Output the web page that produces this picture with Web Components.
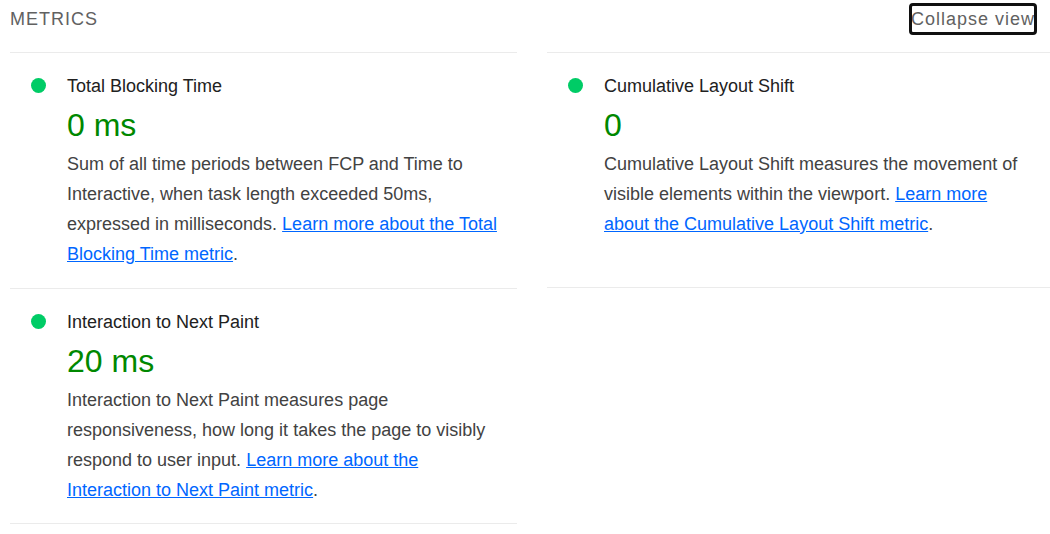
<!DOCTYPE html>
<html lang="en">
<head>
<meta charset="utf-8">
<title>Metrics</title>
<style>
body { margin: 0; background: #fff; font-family: "Liberation Sans", Arial, sans-serif; font-size: 18px; line-height: 30px; color: #212121; }
</style>
</head>
<body>
<metrics-panel>
  <span slot="title">METRICS</span>
  <metric-card name="Total Blocking Time" value="0 ms">Sum of all time periods between FCP and Time to Interactive, when task length exceeded 50ms, expressed in milliseconds. <metric-link href="#tbt">Learn more about the Total Blocking Time metric</metric-link>.</metric-card>
  <metric-card name="Cumulative Layout Shift" value="0" last>Cumulative Layout Shift measures the movement of visible elements within the viewport. <metric-link href="#cls">Learn more about the Cumulative Layout Shift metric</metric-link>.</metric-card>
  <metric-card name="Interaction to Next Paint" value="20 ms" last>Interaction to Next Paint measures page responsiveness, how long it takes the page to visibly respond to user input. <metric-link href="#inp">Learn more about the Interaction to Next Paint metric</metric-link>.</metric-card>
</metrics-panel>
<script>
class MetricLink extends HTMLElement {
  connectedCallback() {
    const root = this.attachShadow({ mode: "open" });
    root.innerHTML = `<style>:host{display:inline} a{color:#06f;text-decoration:underline}</style><a><slot></slot></a>`;
    root.querySelector("a").href = this.getAttribute("href");
  }
}
class MetricCard extends HTMLElement {
  connectedCallback() {
    const root = this.attachShadow({ mode: "open" });
    root.innerHTML = `<style>
      :host { display: block; box-sizing: border-box; border-top: 1px solid #ebebeb; border-bottom: 1px solid transparent; padding: 18px 20px; }
      :host([last]) { border-bottom-color: #ebebeb; }
      article { display: grid; grid-template-columns: 16px 1fr; column-gap: 21px; }
      .dot { width: 15px; height: 15px; margin: 7px 1px; border-radius: 50%; background: #0c6; }
      h3 { margin: 0; font-size: 18px; font-weight: 400; line-height: 30px; color: #212121; }
      .value { font-size: 32px; line-height: 48px; color: #080; }
      p { margin: 0; color: #424242; }
    </style>
    <article><div class="dot"></div><div><h3></h3><div class="value"></div><p><slot></slot></p></div></article>`;
    root.querySelector("h3").textContent = this.getAttribute("name");
    root.querySelector(".value").textContent = this.getAttribute("value");
  }
}
class MetricsPanel extends HTMLElement {
  connectedCallback() {
    const root = this.attachShadow({ mode: "open" });
    root.innerHTML = `<style>
      :host { display: block; padding-left: 10px; overflow-x: clip; }
      header { display: flex; align-items: center; justify-content: space-between; padding: 3px 15px 17px 0; color: #616161; }
      h2 { margin: 0; font-size: 18px; font-weight: 400; line-height: 32px; letter-spacing: 1px; }
      button { margin: 0; padding: 0; height: 28px; border: 0; background: none; font: inherit; line-height: 28px; letter-spacing: 1px; color: #616161; border-radius: 2px; outline: 3px solid #101010; outline-offset: -1px; }
      .grid { display: grid; grid-template-columns: 1fr 1fr; column-gap: 30px; margin-right: -4px; }
    </style>
    <header><h2><slot name="title"></slot></h2><button type="button">Collapse view</button></header>
    <section class="grid"><slot></slot></section>`;
  }
}
customElements.define("metric-link", MetricLink);
customElements.define("metric-card", MetricCard);
customElements.define("metrics-panel", MetricsPanel);
</script>
</body>
</html>
